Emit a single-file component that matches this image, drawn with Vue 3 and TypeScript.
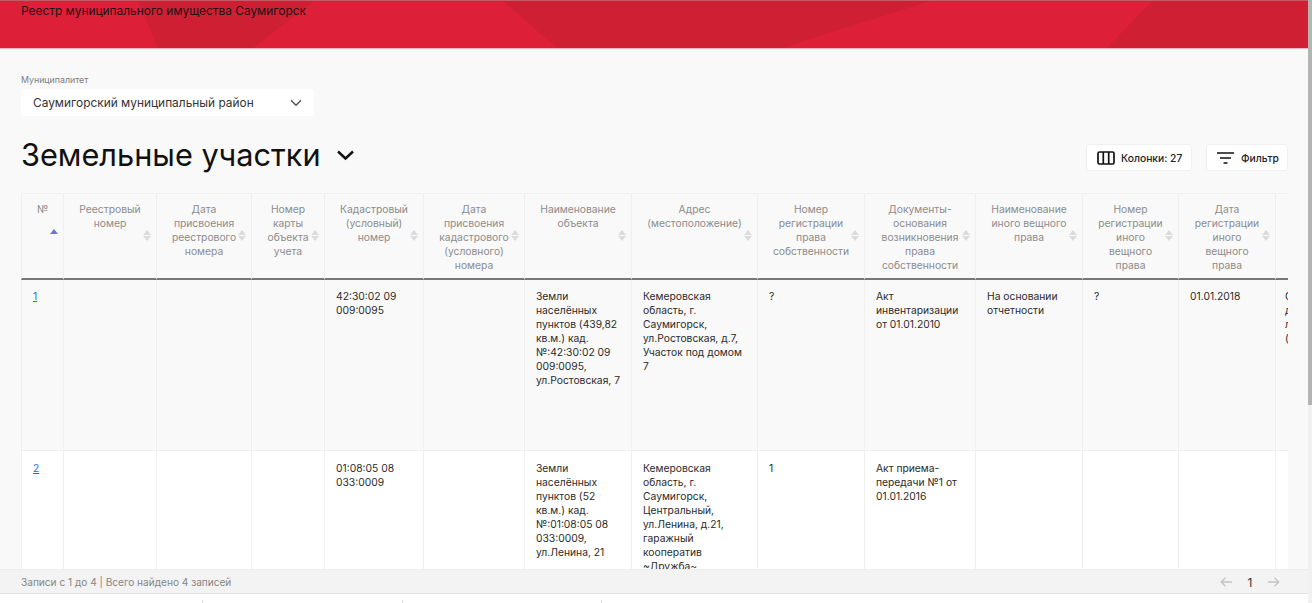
<template>
  <div class="page">
    <div class="content">
      <header class="topbar">
        <svg class="topbar-bg" viewBox="0 0 1308 48" preserveAspectRatio="none" aria-hidden="true">
          <polygon points="138,0 314,0 253,48 158,48" />
          <polygon points="503,0 930,0 782,48 557,48" />
          <polygon points="1152,0 1308,0 1308,48 1107,48" />
        </svg>
        <span class="topbar-title">Реестр муниципального имущества Саумигорск</span>
      </header>

      <main class="main">
        <label class="field-label">Муниципалитет</label>
        <div class="select">
          <span>Саумигорский муниципальный район</span>
          <svg width="12" height="8" viewBox="0 0 12 8" fill="none">
            <path d="M1 1.2l5 5 5-5" stroke="#555" stroke-width="1.5" />
          </svg>
        </div>

        <div class="title-row">
          <h1 class="title">Земельные участки</h1>
          <svg class="title-chevron" width="19" height="12" viewBox="0 0 19 12" fill="none">
            <path d="M2 2.5l7.5 7 7.5-7" stroke="#111" stroke-width="2.4" />
          </svg>
          <div class="actions">
            <button class="btn btn-columns">
              <svg width="18" height="14" viewBox="0 0 18 14" fill="none">
                <rect x="1" y="1" width="16" height="12" rx="1.5" stroke="#111" stroke-width="1.7" />
                <path d="M6.3 1v12M11.7 1v12" stroke="#111" stroke-width="1.7" />
              </svg>
              Колонки: 27
            </button>
            <button class="btn btn-filter">
              <svg width="17" height="12" viewBox="0 0 17 12" fill="none">
                <path d="M0 1h17M3 6h11M6.5 11h4" stroke="#111" stroke-width="1.6" />
              </svg>
              Фильтр
            </button>
          </div>
        </div>

        <div class="table-wrap">
          <table class="grid">
            <colgroup>
              <col v-for="(c, i) in columns" :key="i" :style="{ width: c.width + 'px' }" />
            </colgroup>
            <thead>
              <tr>
                <th v-for="(c, i) in columns" :key="i" :class="{ sorted: i === 0 }">{{ c.title }}</th>
              </tr>
            </thead>
            <tbody>
              <tr v-for="row in rows" :key="row.id" :class="row.id === 1 ? 'row-odd' : 'row-even'">
                <td><a href="#" class="num-link">{{ row.id }}</a></td>
                <td v-for="(v, i) in row.cells" :key="i">{{ v }}</td>
              </tr>
            </tbody>
          </table>
        </div>
      </main>

      <footer class="footer">
        <span>Записи с 1 до 4 | Всего найдено 4 записей</span>
        <div class="pager">
          <svg width="12" height="10" viewBox="0 0 12 10" fill="none">
            <path d="M12 5H1.2M5.5 .7L1.2 5l4.3 4.3" stroke="#c4c4c4" stroke-width="1.3" />
          </svg>
          <span class="page-num">1</span>
          <svg width="12" height="10" viewBox="0 0 12 10" fill="none">
            <path d="M0 5h10.8M6.5 .7L10.8 5l-4.3 4.3" stroke="#c4c4c4" stroke-width="1.3" />
          </svg>
        </div>
      </footer>
      <div class="bottom-strip"><i /><i /><i /></div>
    </div>
    <div class="scrollbar"><div class="thumb" /></div>
  </div>
</template>

<script setup lang="ts">
interface Column {
  title: string;
  width: number;
}
interface Row {
  id: number;
  cells: string[];
}

const columns: Column[] = [
  { title: "№", width: 42 },
  { title: "Реестровый\nномер", width: 93 },
  { title: "Дата\nприсвоения\nреестрового\nномера", width: 95 },
  { title: "Номер\nкарты\nобъекта\nучета", width: 73 },
  { title: "Кадастровый\n(условный)\nномер", width: 99 },
  { title: "Дата\nприсвоения\nкадастрового\n(условного)\nномера", width: 101 },
  { title: "Наименование\nобъекта", width: 107 },
  { title: "Адрес\n(местоположение)", width: 126 },
  { title: "Номер\nрегистрации\nправа\nсобственности", width: 107 },
  { title: "Документы-\nоснования\nвозникновения\nправа\nсобственности", width: 111 },
  { title: "Наименование\nиного вещного\nправа", width: 107 },
  { title: "Номер\nрегистрации\nиного\nвещного\nправа", width: 96 },
  { title: "Дата\nрегистрации\nиного\nвещного\nправа", width: 97 },
  { title: "", width: 100 },
];

const rows: Row[] = [
  {
    id: 1,
    cells: [
      "", "", "",
      "42:30:02 09\n009:0095",
      "",
      "Земли\nнаселённых\nпунктов (439,82\nкв.м.) кад.\n№:42:30:02 09\n009:0095,\nул.Ростовская, 7",
      "Кемеровская\nобласть, г.\nСаумигорск,\nул.Ростовская, д.7,\nУчасток под домом\n7",
      "?",
      "Акт\nинвентаризации\nот 01.01.2010",
      "На основании\nотчетности",
      "?",
      "01.01.2018",
      "Сведения\nдля\nлица\n(нет)",
    ],
  },
  {
    id: 2,
    cells: [
      "", "", "",
      "01:08:05 08\n033:0009",
      "",
      "Земли\nнаселённых\nпунктов (52\nкв.м.) кад.\n№:01:08:05 08\n033:0009,\nул.Ленина, 21",
      "Кемеровская\nобласть, г.\nСаумигорск,\nЦентральный,\nул.Ленина, д.21,\nгаражный\nкооператив\n~Дружба~",
      "1",
      "Акт приема-\nпередачи №1 от\n01.01.2016",
      "", "", "", "",
    ],
  },
];
</script>

<style>
html, body { margin: 0; height: 100%; overflow: hidden; background: #fff; }
</style>

<style scoped>
.page {
  display: flex;
  height: 603px;
  overflow: hidden;
  font-family: Inter, "Noto Sans", sans-serif;
  color: #222;
}
.content {
  flex: 1;
  min-width: 0;
  display: flex;
  flex-direction: column;
  background: #f9f9f9;
}
.scrollbar { width: 4px; background: #f1f1f1; }
.thumb { height: 405px; background: #b4b4b4; }

.topbar {
  position: relative;
  height: 47px;
  flex: none;
  box-sizing: content-box;
  background: #dd1f37;
  border-top: 1px solid #c7596a;
  border-bottom: 1px solid #eeb4bd;
  padding-left: 21px;
}
.topbar-bg { position: absolute; inset: 0; width: 100%; height: 100%; }
.topbar-bg polygon { fill: #cf2033; }
.topbar-title {
  position: relative;
  display: block;
  font-size: 11.9px;
  line-height: 20px;
  color: #1d1215;
}

.main {
  flex: 1;
  min-height: 0;
  display: flex;
  flex-direction: column;
  padding: 25px 20px 0 21px;
}
.field-label {
  font-size: 8.8px;
  line-height: 12px;
  color: #7d7d7d;
}
.select {
  margin-top: 3px;
  width: 293px;
  height: 27px;
  box-sizing: border-box;
  padding: 0 12px;
  display: flex;
  align-items: center;
  justify-content: space-between;
  background: #fff;
  border-radius: 2px;
  font-size: 11.9px;
  color: #333;
}
.title-row {
  margin-top: 20px;
  height: 37px;
  display: flex;
  align-items: center;
}
.title {
  margin: 0;
  font-size: 30.7px;
  line-height: 37px;
  font-weight: 400;
  color: #111;
}
.title-chevron { margin-left: 15px; }
.actions {
  margin-left: auto;
  display: flex;
  gap: 14px;
  align-self: flex-end;
  margin-bottom: 2px;
}
.btn {
  height: 27px;
  box-sizing: border-box;
  display: flex;
  align-items: center;
  gap: 6px;
  background: #fff;
  border: 1px solid #f0f0f0;
  border-radius: 3px;
  font: 500 10.3px Inter, "Noto Sans", sans-serif;
  color: #222;
  padding: 0 4px 0 10px;
  white-space: nowrap;
}
.btn svg { flex: none; }
.btn-columns { width: 106px; }
.btn-filter { width: 82px; gap: 7px; }

.table-wrap {
  margin-top: 20px;
  flex: 1;
  min-height: 0;
  overflow: hidden;
}
.grid {
  border-collapse: separate;
  border-spacing: 0;
  table-layout: fixed;
  width: 1349px;
  font-size: 10.3px;
  line-height: 14px;
}
th {
  position: relative;
  height: 87px;
  box-sizing: border-box;
  padding: 8px 14px 0;
  vertical-align: top;
  white-space: pre-line;
  font-weight: 400;
  color: #8c8c8c;
  border-top: 1px solid #f0f0f0;
  border-left: 1px solid #efefef;
  border-bottom: 2px solid #777;
}
th::before,
th::after {
  content: "";
  position: absolute;
  right: 5px;
  border-left: 4px solid transparent;
  border-right: 4px solid transparent;
}
th::before { top: 36px; border-bottom: 5px solid #dcdcdc; }
th::after { top: 42px; border-top: 5px solid #dcdcdc; }
th:last-child::before,
th:last-child::after { display: none; }
th.sorted::before { top: 35px; border-bottom-color: #6f74d8; }
th.sorted::after { display: none; }

td {
  height: 171px;
  box-sizing: border-box;
  padding: 9px 11px 0;
  vertical-align: top;
  white-space: pre;
  color: #2b2b2b;
  border-left: 1px solid #efefef;
  border-bottom: 1px solid #efefef;
}
td:last-child { padding-left: 9px; }
.row-even td { background: #fff; height: 200px; padding-top: 10px; }
.num-link { color: #2b6fd6; }

.footer {
  flex: none;
  height: 25px;
  box-sizing: border-box;
  display: flex;
  align-items: center;
  justify-content: space-between;
  padding: 1px 28px 0 21px;
  background: #f3f3f3;
  border-top: 1px solid #ececec;
  border-bottom: 1px solid #e4e4e4;
  font-size: 10.1px;
  color: #868686;
}
.pager { display: flex; align-items: center; gap: 14px; }
.page-num { width: 8px; text-align: center; font-size: 12px; color: #333; }

.bottom-strip {
  flex: none;
  height: 9px;
  background: #fff;
  position: relative;
}
.bottom-strip i {
  position: absolute;
  bottom: 0;
  width: 1px;
  height: 3px;
  background: #ddd;
}
.bottom-strip i:nth-child(1) { left: 202px; }
.bottom-strip i:nth-child(2) { left: 402px; }
.bottom-strip i:nth-child(3) { left: 601px; }
</style>
